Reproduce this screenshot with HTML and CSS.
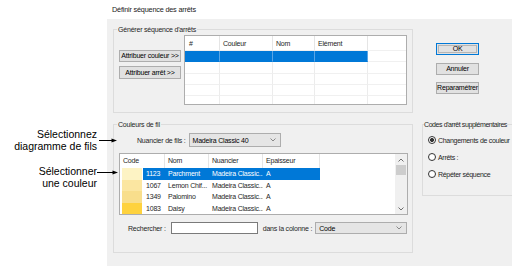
FILE: index.html
```html
<!DOCTYPE html>
<html lang="fr">
<head>
<meta charset="utf-8">
<title>Définir séquence des arrêts</title>
<link rel="stylesheet" href="styles.css">
</head>
<body>
<div class="page">
  <div class="title">Définir séquence des arrêts</div>

  <div class="notes">
    <div class="note n1">Sélectionnez<br>diagramme de fils<svg class="arrow" width="18" height="5" viewBox="0 0 18 5"><line x1="0" y1="2.5" x2="14" y2="2.5"/><polygon points="12.5,0.5 18,2.5 12.5,4.5"/></svg></div>
    <div class="note n2">Sélectionner<br>une couleur<svg class="arrow" width="21" height="5" viewBox="0 0 21 5"><line x1="0" y1="2.5" x2="17" y2="2.5"/><polygon points="15.5,0.5 21,2.5 15.5,4.5"/></svg></div>
  </div>

  <div class="dialog">
    <div class="top">
      <fieldset class="group g1">
        <legend>Générer séquence d'arrêts</legend>
        <div class="g1body">
          <div class="assign">
            <button class="btn">Attribuer couleur &gt;&gt;</button>
            <button class="btn tall">Attribuer arrêt &gt;&gt;</button>
          </div>
          <div class="grid1">
            <div class="r1 head"><span>#</span><span>Couleur</span><span>Nom</span><span>Elément</span><span></span></div>
            <div class="r1 sel"><span></span><span></span><span></span><span></span><span></span></div>
            <div class="r1"><span></span><span></span><span></span><span></span><span></span></div>
            <div class="r1"><span></span><span></span><span></span><span></span><span></span></div>
            <div class="r1"><span></span><span></span><span></span><span></span><span></span></div>
            <div class="r1"><span></span><span></span><span></span><span></span><span></span></div>
          </div>
        </div>
      </fieldset>
      <div class="actions">
        <button class="btn ok">OK</button>
        <button class="btn cancel">Annuler</button>
        <button class="btn reset">Reparamétrer</button>
      </div>
    </div>

    <div class="bottom">
      <fieldset class="group g2">
        <legend>Couleurs de fil</legend>
        <div class="g2body">
          <div class="chart">
            <span class="lbl">Nuancier de fils :</span>
            <div class="select wide"><span>Madeira Classic 40</span><svg width="6" height="4" viewBox="0 0 6 4"><polyline points="0.5,0.5 3,3 5.5,0.5"/></svg></div>
          </div>
          <div class="list">
            <div class="lmain">
              <div class="r2 head"><span>Code</span><span>Nom</span><span>Nuancier</span><span>Epaisseur</span><span></span></div>
              <div class="r2 sel"><span class="code"><i class="sw c1"></i><b>1123</b></span><span>Parchment</span><span>Madeira Classic...</span><span>A</span><span></span></div>
              <div class="r2"><span class="code"><i class="sw c2"></i><b>1067</b></span><span>Lemon Chif...</span><span>Madeira Classic...</span><span>A</span><span></span></div>
              <div class="r2"><span class="code"><i class="sw c3"></i><b>1349</b></span><span>Palomino</span><span>Madeira Classic...</span><span>A</span><span></span></div>
              <div class="r2"><span class="code"><i class="sw c4"></i><b>1083</b></span><span>Daisy</span><span>Madeira Classic...</span><span>A</span><span></span></div>
            </div>
            <div class="sbar">
              <div class="sbtn"><svg width="6" height="4" viewBox="0 0 6 4"><polyline points="0.5,3.5 3,1 5.5,3.5"/></svg></div>
              <div class="thumb"></div>
              <div class="sfill"></div>
              <div class="sbtn"><svg width="6" height="4" viewBox="0 0 6 4"><polyline points="0.5,0.5 3,3 5.5,0.5"/></svg></div>
            </div>
          </div>
          <div class="search">
            <span class="lbl">Rechercher :</span>
            <div class="input"></div>
            <span class="lbl">dans la colonne :</span>
            <div class="select col"><span>Code</span><svg width="6" height="4" viewBox="0 0 6 4"><polyline points="0.5,0.5 3,3 5.5,0.5"/></svg></div>
          </div>
        </div>
      </fieldset>

      <fieldset class="group g3">
        <legend>Codes d'arrêt supplémentaires</legend>
        <div class="g3body">
          <div class="radio on"><i></i>Changements de couleur</div>
          <div class="radio"><i></i>Arrêts :</div>
          <div class="radio"><i></i>Répéter séquence</div>
        </div>
      </fieldset>
    </div>
  </div>
</div>
</body>
</html>
```

FILE: styles.css
```css
* { box-sizing: border-box; }
html, body { margin: 0; padding: 0; }
body {
  width: 512px;
  height: 268px;
  overflow: hidden;
  background: #fff;
  font-family: "Liberation Sans", Arial, sans-serif;
}

.page {
  display: grid;
  grid-template-columns: 107px 405px;
  grid-template-rows: 19px 247px;
}

.title {
  grid-column: 2;
  grid-row: 1;
  padding: 5px 0 0 5px;
  font-size: 7.3px;
  line-height: 9px;
  letter-spacing: -0.2px;
  color: #1a1a1a;
}

/* callouts */
.notes {
  grid-column: 1;
  grid-row: 2;
  position: relative;
  z-index: 1;
  display: flex;
  flex-direction: column;
  align-items: flex-end;
  gap: 13px;
  padding: 109px 10px 0 0;
  font-size: 10.5px;
  line-height: 12px;
  color: #000;
}
.note { position: relative; text-align: right; }
.arrow { position: absolute; stroke: #000; fill: #000; }
.arrow line { stroke-width: 1; }
.arrow polygon { stroke: none; }
.n1 .arrow { left: calc(100% + 2px); top: 10px; }
.n2 .arrow { left: 100%; top: 5px; }

/* dialog */
.dialog {
  grid-column: 2;
  grid-row: 2;
  min-width: 0;
  overflow: hidden;
  background: #f0f0f0;
  padding: 6px 0 0 6px;
  display: flex;
  flex-direction: column;
  gap: 6.5px;
  font-size: 7px;
  line-height: 9px;
  letter-spacing: -0.2px;
  color: #000;
}
.top, .bottom { display: flex; align-items: flex-start; }
.top > *, .bottom > * { flex-shrink: 0; }

.group {
  margin: 0;
  padding: 0;
  min-width: 0;
  border: 1px solid #dcdcdc;
}
.group legend {
  margin-left: 3px;
  padding: 0 1px;
  line-height: 9px;
  color: #1e1e1e;
  white-space: nowrap;
}

.btn {
  display: block;
  margin: 0;
  padding: 0;
  height: 12px;
  font: inherit;
  line-height: 10px;
  letter-spacing: inherit;
  color: #000;
  background: #e1e1e1;
  border: 1px solid #adadad;
  white-space: nowrap;
  text-align: center;
}

/* group 1 */
.g1 { width: 300px; height: 88px; }
.g1body { display: flex; align-items: flex-start; padding: 1px 0 0 5px; }
.assign { display: flex; flex-direction: column; gap: 4px; margin-top: 15px; width: 62px; flex-shrink: 0; }
.assign .btn { width: 62px; }
.assign .tall { height: 13px; }

.grid1 {
  flex-shrink: 0;
  width: 223px;
  height: 70px;
  margin-left: 3px;
  background: #fff;
  border: 1px solid #adadad;
  overflow: hidden;
}
.r1 {
  display: grid;
  grid-template-columns: 35px 53px 42px 53px 1fr;
  height: 11.33px;
}
.r1 span { border-right: 1px solid #ececec; border-bottom: 1px solid #f0f0f0; }
.r1 span:last-child { border-right: 0; }
.r1.head { height: 15px; }
.r1.head span { padding: 3px 0 0 3px; border-right-color: #e5e5e5; border-bottom-color: #f0f0f0; color: #1e1e1e; }
.r1.head span:first-child { padding-left: 4px; }
.r1.sel span:not(:last-child) { background: #0078d7; border-right-color: #5aa5e5; border-bottom-color: #0078d7; }

/* right buttons */
.actions { display: flex; flex-direction: column; margin: 18px 0 0 23px; width: 43px; }
.actions .btn { width: 43px; }
.ok { border-color: #0078d7; box-shadow: inset 0 0 0 1px #e1e1e1, inset 0 0 0 2px #b5b5b5; }
.cancel { margin-top: 8px; }
.reset { margin-top: 7px; }

/* group 2 */
.g2 { width: 300px; height: 133px; }
.g2body { padding: 4.5px 0 0 5px; }
.chart { display: flex; align-items: center; gap: 3px; padding-left: 18px; height: 14px; }
.lbl { white-space: nowrap; color: #1e1e1e; }

.select {
  display: flex;
  align-items: center;
  justify-content: space-between;
  background: #e5e5e5;
  border: 1px solid #adadad;
  padding: 0 4px 0 3px;
}
.select svg { fill: none; stroke: #707070; stroke-width: 0.8; }
.select.wide { width: 92px; height: 14px; }
.select.col { width: 92px; height: 12.5px; margin-left: -2px; }

.list {
  display: flex;
  width: 289px;
  height: 62px;
  margin-top: 6px;
  background: #fff;
  border: 1px solid #adadad;
}
.lmain { flex: 1; }
.r2 {
  display: grid;
  grid-template-columns: 45px 44px 54px 57px 1fr;
  height: 11.5px;
  line-height: 11.5px;
  color: #1e1e1e;
}
.r2 span { padding-left: 3px; white-space: nowrap; overflow: hidden; }
.r2.head { height: 14px; line-height: 14px; }
.r2.head span { border-right: 1px solid #e5e5e5; }
.r2.head span:last-child { border-right: 0; }
.r2 .code { display: flex; padding-left: 2px; }
.sw { display: block; width: 20px; height: 100%; }
.code b { flex: 1; font-weight: normal; padding-left: 3px; margin-left: 1px; }
.c1 { background: #fdf3c4; }
.c2 { background: #fbe6a1; }
.c3 { background: #f8de8c; }
.c4 { background: #fed23e; }
.r2.sel { color: #fff; }
.r2.sel span:nth-child(n+2):nth-child(-n+4), .r2.sel .code b { background: #0078d7; }

.sbar { width: 12px; display: flex; flex-direction: column; background: #f0f0f0; }
.sbtn { height: 11px; display: flex; align-items: center; justify-content: center; }
.sbtn svg { fill: none; stroke: #606060; stroke-width: 0.9; }
.thumb { height: 10px; margin: 0 1px; background: #cdcdcd; }
.sfill { flex: 1; }

.search { display: flex; align-items: center; gap: 5px; margin-top: 7px; padding-left: 9px; height: 12px; }
.input { width: 87px; height: 12px; background: #fff; border: 1px solid #7a7a7a; }

/* group 3 */
.g3 { width: 120px; height: 76.5px; margin-left: 9px; }
.g3 legend { margin-left: 1px; padding: 0; letter-spacing: -0.42px; }
.g3body { display: flex; flex-direction: column; gap: 8px; padding: 7px 0 0 5px; }
.radio { display: flex; align-items: center; gap: 2px; height: 9px; white-space: nowrap; color: #1e1e1e; letter-spacing: -0.3px; }
.radio i {
  display: block;
  width: 8px;
  height: 8px;
  border: 1px solid #333;
  border-radius: 50%;
  background: #fff;
}
.radio.on i { background: radial-gradient(circle, #333 0 1.7px, #fff 2.3px); }
```
